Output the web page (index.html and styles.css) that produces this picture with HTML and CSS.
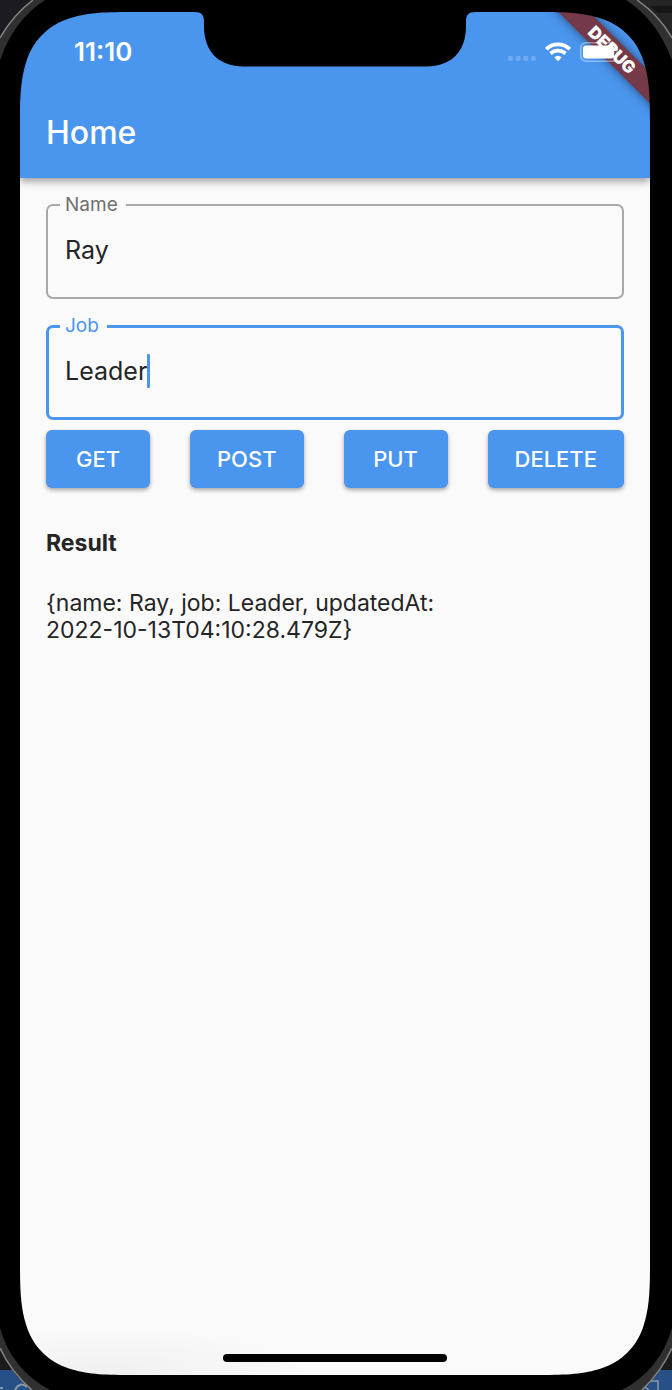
FILE: index.html
```html
<!DOCTYPE html>
<html lang="en">
<head>
<meta charset="utf-8">
<meta name="viewport" content="width=device-width, initial-scale=1">
<title>Home</title>
<link rel="stylesheet" href="styles.css">
</head>
<body>
<div class="phone">
  <svg class="edge edge-tl" viewBox="0 0 64 64" aria-hidden="true"><path d="M0 0H45Q14 20 0 60Z" fill="#303030"/><path d="M0 0H33Q13 15 0 38Z" fill="#1d1b22"/><path d="M33 0Q13 15 0 38" fill="none" stroke="#858585" stroke-width="1.5"/></svg>
  <svg class="edge edge-tr" viewBox="0 0 64 64" aria-hidden="true"><path d="M64 0H18Q49 20 64 60Z" fill="#303030"/><path d="M64 0H29Q51 15 64 38Z" fill="#252525"/><path d="M42 6H64V13H50Z" fill="#161616"/><path d="M29 0Q51 15 64 38" fill="none" stroke="#858585" stroke-width="1.5"/></svg>
  <svg class="edge edge-bl" viewBox="0 0 64 64" aria-hidden="true"><path d="M0 2Q12 44 50 64H0Z" fill="#303030"/><path d="M0 22Q11 46 32 64H0Z" fill="#1b1b1b"/><path d="M0 44H12Q20 55 32 64H0Z" fill="#265086"/><path d="M27 61Q20 55 15 64M0 62H3" fill="none" stroke="#8c98a8" stroke-width="2"/><path d="M0 22Q11 46 32 64" fill="none" stroke="#858585" stroke-width="1.5"/></svg>
  <svg class="edge edge-br" viewBox="0 0 64 64" aria-hidden="true"><path d="M64 2Q52 44 14 64H64Z" fill="#303030"/><path d="M64 22Q53 46 34 64H64Z" fill="#1b1b1b"/><path d="M64 44H52Q45 55 34 64H64Z" fill="#265086"/><path d="M43 55H50V64M37 61L41 64" fill="none" stroke="#8c98a8" stroke-width="1.5"/><path d="M64 22Q53 46 34 64" fill="none" stroke="#858585" stroke-width="1.5"/></svg>

  <div class="screen">
    <header class="app-bar">
      <div class="status">
        <time class="clock">11:10</time>
        <div class="status-icons">
          <svg width="28" height="6" viewBox="0 0 28 6" fill="#fff" fill-opacity=".2" aria-hidden="true"><rect width="5" height="5" rx="1.5"/><rect x="7.6" width="5" height="5" rx="1.5"/><rect x="15.2" width="5" height="5" rx="1.5"/><rect x="22.8" width="5" height="5" rx="1.5"/></svg>
          <svg class="wifi" width="26" height="20" viewBox="0 0 26 20" aria-label="Wi-Fi" role="img"><g fill="none" stroke="#fff" stroke-width="3.8"><path d="M1.300 7.200Q6.200 2.300 13 2.300T24.700 7.200"/><path d="M5.500 11.500Q8.800 8.600 13 8.600T20.500 11.500"/></g><path d="M9.300 15.300Q13 12.200 16.700 15.300L13 19.300Z" fill="#fff"/></svg>
          <svg class="battery" width="42" height="20" viewBox="0 0 42 20" aria-label="Battery full" role="img"><rect x=".8" y=".8" width="36.400" height="18.400" rx="5" fill="none" stroke="#fff" stroke-opacity=".4" stroke-width="1.600"/><rect x="3" y="3.500" width="31" height="13" rx="3" fill="#fff"/><path d="M39 6.500Q41.500 8 41.500 10T39 13.500Z" fill="#fff" fill-opacity=".4"/></svg>
        </div>
      </div>
      <h1 class="title">Home</h1>
    </header>
    <main class="content">
      <fieldset class="field">
        <legend><label for="name">Name</label></legend>
        <div class="entry"><input id="name" type="text" value="Ray"></div>
      </fieldset>
      <fieldset class="field field-active">
        <legend><label for="job">Job</label></legend>
        <div class="entry"><input id="job" type="text" value="Leader"><span class="caret"></span></div>
      </fieldset>
      <div class="actions">
        <button type="button">GET</button>
        <button type="button">POST</button>
        <button type="button">PUT</button>
        <button type="button">DELETE</button>
      </div>
      <h2 class="result-title">Result</h2>
      <p class="result">{name: Ray, job: Leader, updatedAt: <span class="stamp">2022-10-13T04:10:28.479Z}</span></p>
    </main>
    <div class="home-indicator"></div>

    <div class="banner">DEBUG</div>
    <svg class="notch" viewBox="0 0 282 55" aria-hidden="true"><path d="M0 0C8 0 10 3 10 10V14C10 40 25 54.500 50 54.500H232C257 54.500 272 40 272 14V10C272 3 274 0 282 0Z"/></svg>
    <svg class="corner corner-tl" viewBox="0 0 110 110" aria-hidden="true"><path d="M0 0H110C82 0 66 1 49 6.500C38 10 29.500 15.500 22.500 22.500S10 38 6.500 49C1 66 0 82 0 110Z"/></svg>
    <svg class="corner corner-tr" viewBox="0 0 110 110" aria-hidden="true"><path d="M0 0H110C82 0 66 1 49 6.500C38 10 29.500 15.500 22.500 22.500S10 38 6.500 49C1 66 0 82 0 110Z"/></svg>
    <svg class="corner corner-bl" viewBox="0 0 110 110" aria-hidden="true"><path d="M0 0H110C82 0 66 1 49 6.500C38 10 29.500 15.500 22.500 22.500S10 38 6.500 49C1 66 0 82 0 110Z"/></svg>
    <svg class="corner corner-br" viewBox="0 0 110 110" aria-hidden="true"><path d="M0 0H110C82 0 66 1 49 6.500C38 10 29.500 15.500 22.500 22.500S10 38 6.500 49C1 66 0 82 0 110Z"/></svg>
  </div>
</div>
</body>
</html>
```
FILE: styles.css
```css
* { box-sizing: border-box; }

body {
  margin: 0;
  background: #000;
  font-family: Inter, "Liberation Sans", sans-serif;
  color: #252525;
}

.phone {
  position: relative;
  display: flex;
  min-height: 100vh;
  padding: 12px 22px 15px 20px;
}

.edge { position: absolute; width: 64px; height: 64px; z-index: 4; }
.edge-tl { top: 0; left: 0; }
.edge-tr { top: 0; right: 0; }
.edge-bl { bottom: 0; left: 0; }
.edge-br { bottom: 0; right: 0; }

.screen {
  position: relative;
  display: flex;
  flex: 1;
  flex-direction: column;
  overflow: hidden;
  background: radial-gradient(ellipse 200px 50px at 90px 100%, #f0f0f0, #fafafa) #fafafa;
}

.corner { position: absolute; width: 110px; height: 110px; z-index: 3; }
.corner-tl { top: 0; left: 0; }
.corner-tr { top: 0; right: 0; transform: scaleX(-1); }
.corner-bl { bottom: 0; left: 0; transform: scaleY(-1); }
.corner-br { bottom: 0; right: 0; transform: scale(-1); }

.notch {
  position: absolute;
  top: 0;
  left: 50%;
  width: 282px;
  height: 55px;
  transform: translateX(-50%);
}

.app-bar {
  padding: 24px 26px;
  background: #4a95ed;
  color: #fff;
  box-shadow: 0 3px 8px rgba(0, 0, 0, .4);
}

.status {
  position: relative;
  z-index: 2;
  display: flex;
  justify-content: space-between;
  align-items: center;
  height: 32px;
  padding: 0 2px 0 28px;
}

.clock { font-size: 26px; font-weight: 600; line-height: 32px; }

.status-icons { display: flex; align-items: flex-end; gap: 9px; }
.status-icons svg { display: block; }

.title {
  margin: 44px 0 0;
  font-size: 32px;
  font-weight: 500;
  line-height: 42px;
}

.banner {
  position: absolute;
  top: 27px;
  right: -62px;
  width: 200px;
  height: 22px;
  background: #743a4a;
  box-shadow: 0 0 10px rgba(0, 0, 0, .5);
  color: #fff;
  font-size: 17px;
  font-weight: 900;
  line-height: 22px;
  text-align: center;
  transform: rotate(45deg);
  z-index: 1;
}

.content { flex: 1; padding: 15px 26px; }

.field {
  min-width: 0;
  height: 106px;
  margin: 0 0 15px;
  padding: 0 12px;
  border: 2px solid #a8a8a8;
  border-radius: 7px;
}

.field legend {
  padding: 0 8px 0 5px;
  color: #707070;
  font-size: 19px;
  line-height: 24px;
}

.field-active { padding: 0 11px; border: 3px solid #4a95ed; }
.field-active legend { color: #4a95ed; }

.entry { display: flex; align-items: center; height: 66px; padding-left: 5px; }

.entry input {
  min-width: 0;
  padding: 0;
  border: 0;
  outline: 0;
  background: transparent;
  color: inherit;
  font: 25px/34px Inter, "Liberation Sans", sans-serif;
  field-sizing: content;
}

.caret { width: 3px; height: 34px; border-radius: 1px; background: #4a95ed; }

.actions { display: flex; justify-content: space-between; margin-top: -5px; }

.actions button {
  min-width: 104px;
  height: 58px;
  padding: 0 27px;
  border: 0;
  border-radius: 6px;
  background: #4a95ed;
  box-shadow: 0 2px 4px rgba(0, 0, 0, .35);
  color: #fff;
  font: 500 22px/28px Inter, "Liberation Sans", sans-serif;
}

.result-title { margin: 41px 0 0; font-size: 23px; font-weight: 700; line-height: 28px; }
.result { margin: 33px 0 0; font-size: 23px; line-height: 27px; }
.stamp { white-space: nowrap; }

.home-indicator {
  align-self: center;
  width: 224px;
  height: 8px;
  margin-bottom: 13px;
  border-radius: 4px;
  background: #000;
}
```
